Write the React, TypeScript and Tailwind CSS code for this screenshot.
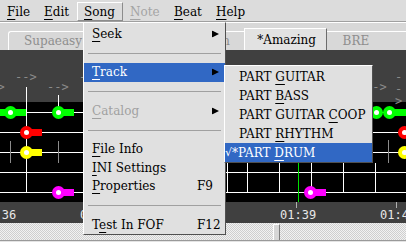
import React from "react";

const serif = "font-['DejaVu_Serif',serif]";
const mono = "font-['DejaVu_Sans_Mono',monospace]";

function Mn({ text, u }: { text: string; u?: number }) {
  if (u === undefined || u < 0) return <span>{text}</span>;
  return (
    <span className="whitespace-pre">
      {text.slice(0, u)}
      <span className="underline decoration-1 underline-offset-[3px]">{text[u]}</span>
      {text.slice(u + 1)}
    </span>
  );
}

const Arrow = () => (
  <svg width="7" height="7" viewBox="0 0 7 7" className="absolute right-[6px] top-1/2 -translate-y-1/2">
    <polygon points="0,0 7,3.5 0,7" fill="#000" />
  </svg>
);

const menuBar = [
  { label: "File", cls: "w-[37px]" },
  { label: "Edit", cls: "w-[40px]" },
  { label: "Song", cls: "w-[46px] border-t-white border-l-white border-r-[#8c8c8c] border-b-[#8c8c8c]" },
  { label: "Note", cls: "w-[44px] text-[#a4a4a4]" },
  { label: "Beat", cls: "w-[42px]" },
  { label: "Help", cls: "w-[50px]" },
];

type Note = { x: number; y: number; tail: number; color: string };

const noteColor: Record<string, string> = {
  green: "bg-[#00ff00]",
  red: "bg-[#ff0000]",
  yellow: "bg-[#ffff00]",
  magenta: "bg-[#ff00ff]",
};

// canvas coords: top of canvas = page y 50
const notes: Note[] = [
  { x: 58, y: 62, tail: 16, color: "green" },
  { x: 26, y: 82, tail: 16, color: "red" },
  { x: 26, y: 102, tail: 16, color: "yellow" },
  { x: 58, y: 142, tail: 16, color: "magenta" },
  { x: 310, y: 142, tail: 16, color: "magenta" },
  { x: 389, y: 62, tail: 20, color: "green" },
  { x: 376, y: 62, tail: 0, color: "green" },
  { x: 404, y: 82, tail: 10, color: "red" },
  { x: 404, y: 102, tail: 10, color: "yellow" },
];

const arrows = [
  { x: 15, y: 21 },
  { x: 79, y: 21 },
  { x: 395, y: 21 },
  { x: -17, y: 31 },
  { x: 47, y: 31 },
  { x: 365, y: 31 },
];

const gridLines = [
  { x: 26, top: 37, h: 105, cls: "bg-white" },
  { x: 58, top: 45, h: 17, cls: "bg-white" },
  { x: 10, top: 91, h: 22, cls: "bg-[#8c8c8c]" },
  { x: 58, top: 91, h: 22, cls: "bg-[#8c8c8c]" },
  { x: 388, top: 90, h: 23, cls: "bg-[#8c8c8c]" },
  { x: 227, top: 113, h: 29, cls: "bg-white" },
  { x: 247, top: 113, h: 29, cls: "bg-white" },
  { x: 279, top: 113, h: 29, cls: "bg-white" },
  { x: 311, top: 113, h: 29, cls: "bg-white" },
  { x: 343, top: 113, h: 29, cls: "bg-white" },
  { x: 375, top: 113, h: 29, cls: "bg-white" },
];

const times = [
  { x: -20, t: "01:36" },
  { x: 80, t: "01:37" },
  { x: 180, t: "01:38" },
  { x: 280, t: "01:39" },
  { x: 380, t: "01:40" },
];

const songMenu: ({ sep: true } | { label: string; u: number; sub?: boolean; key?: string; dim?: boolean; hot?: boolean })[] = [
  { label: "Seek", u: 0, sub: true },
  { sep: true },
  { label: "Track", u: 0, sub: true, hot: true },
  { sep: true },
  { label: "Catalog", u: 0, sub: true, dim: true },
  { sep: true },
  { label: "File Info", u: 0 },
  { label: "INI Settings", u: 0 },
  { label: "Properties", u: 0, key: "F9" },
  { sep: true },
  { label: "Test In FOF", u: 1, key: "F12" },
];

const tracks = [
  { label: "PART GUITAR", u: 5 },
  { label: "PART BASS", u: 5 },
  { label: "PART GUITAR COOP", u: 12 },
  { label: "PART RHYTHM", u: 5 },
];

export default function App() {
  return (
    <div className={`relative w-[406px] h-[242px] overflow-hidden bg-[#dcdcdc] text-[12px] text-black ${serif}`}>
      {/* menu bar */}
      <div className="flex h-[22px] pt-[2px] items-start bg-[#dcdcdc] border-b border-[#a0a0a0]">
        {menuBar.map((m) => (
          <div key={m.label} className={`h-[19px] flex items-center pl-[6px] border border-transparent ${m.cls}`}>
            <Mn text={m.label} u={0} />
          </div>
        ))}
      </div>

      {/* tabs */}
      <div className="flex items-end h-[28px] pl-[8px] bg-[#d8d8d8] border-t border-white">
        <div className="w-[88px] h-[19px] pl-[15px] flex items-center border-t border-l border-r border-t-white border-l-white border-r-[#9a9a9a] rounded-tl-[3px] text-[#8e8e8e]">Supaeasy</div>
        <div className="w-[70px] h-[19px] pl-[15px] flex items-center border-t border-r border-t-white border-r-[#9a9a9a] text-[#8e8e8e]">Easy</div>
        <div className="w-[80px] h-[19px] pl-[15px] flex items-center border-t border-t-white text-[#8e8e8e]">Medium</div>
        <div className="w-[83px] h-[22px] pl-[12px] flex items-center border-t border-l border-r border-t-white border-l-white border-r-[#6c6c6c] bg-[#e2e2e2]">*Amazing</div>
        <div className="w-[80px] h-[19px] pl-[16px] flex items-center border-t border-t-white text-[#8e8e8e]">BRE</div>
      </div>

      {/* note canvas */}
      <div className="relative h-[173px] overflow-hidden">
        <div className="h-[52px] bg-[#404040]" />
        <div className="h-[100px] bg-black" />
        <div className="h-[21px] bg-[#404040]" />

        {arrows.map((a, i) => (
          <span key={i} className={`absolute text-[12px] leading-none text-[#8a8a8a] ${mono}`} style={{ left: a.x, top: a.y }}>
            --&gt;
          </span>
        ))}

        {[62, 82, 102, 122, 142].map((y) => (
          <div key={y} className="absolute left-0 right-0 h-px bg-white" style={{ top: y }} />
        ))}

        {gridLines.map((g, i) => (
          <div key={i} className={`absolute w-px ${g.cls}`} style={{ left: g.x, top: g.top, height: g.h }} />
        ))}

        <div className="absolute left-0 w-[26px] h-[7px] bg-[#00ff00] top-[58.5px]" />
        <div className="absolute left-[4px] top-[55.5px] w-[13px] h-[13px] rounded-full bg-[#00ff00] flex items-center justify-center">
          <div className="w-[5px] h-[5px] rounded-full bg-white" />
        </div>

        {notes.map((n, i) => (
          <React.Fragment key={i}>
            {n.tail > 0 && (
              <div className={`absolute h-[7px] ${noteColor[n.color]}`} style={{ left: n.x, top: n.y - 3.5, width: n.tail }} />
            )}
            <div
              className={`absolute w-[13px] h-[13px] rounded-full flex items-center justify-center ${noteColor[n.color]}`}
              style={{ left: n.x - 6.5, top: n.y - 6.5 }}
            >
              <div className="w-[5px] h-[5px] rounded-full bg-white" />
            </div>
          </React.Fragment>
        ))}

        <div className="absolute left-[298px] top-[52px] w-px h-[100px] bg-[#00e000]" />

        {times.map((t) => (
          <React.Fragment key={t.t}>
            <div className="absolute w-px h-[6px] bg-[#b0b0b0] top-[152px]" style={{ left: t.x + 16 }} />
            <span className={`absolute top-[159px] text-[12px] leading-[13px] text-[#e8e8e8] ${mono}`} style={{ left: t.x }}>
              {t.t}
            </span>
          </React.Fragment>
        ))}
      </div>

      {/* horizontal scroll */}
      <div className="relative h-[17px] bg-[repeating-conic-gradient(#cfcfcf_0_25%,#f2f2f2_0_50%)] bg-[length:2px_2px]">
        <div className="absolute left-[273px] top-[1px] w-[7px] h-[16px] bg-[#d6d6d6] border-l border-t border-white border-r border-r-[#7c7c7c]" />
      </div>
      <div className="h-[2px] border-t border-[#9a9a9a] bg-[#e4e4e4]" />

      {/* Song menu */}
      <div className="absolute left-[83px] top-[22px] w-[143px] pt-[1.5px] bg-[#e0e0e0] border border-t-white border-l-white border-r-[#505050] border-b-[#505050]">
        {songMenu.map((m, i) =>
          "sep" in m ? (
            <div key={i} className="h-[20px] flex items-center px-[4px]">
              <div className="h-px w-full bg-[#a0a0a0]" />
            </div>
          ) : (
            <div
              key={i}
              className={`relative h-[18.5px] flex items-center pl-[8px] ${m.hot ? "bg-[#3168c4] text-white" : ""} ${m.dim ? "text-[#a0a0a0]" : ""}`}
            >
              <Mn text={m.label} u={m.u} />
              {m.key && <span className="absolute left-[113px]">{m.key}</span>}
              {m.sub && <Arrow />}
            </div>
          )
        )}
      </div>

      {/* Track submenu */}
      <div className="absolute left-[224px] top-[65px] w-[149px] pt-px bg-[#e0e0e0] border border-t-white border-l-white border-r-[#505050] border-b-[#505050]">
        {tracks.map((t) => (
          <div key={t.label} className="h-[19px] flex items-center pl-[14px]">
            <Mn text={t.label} u={t.u} />
          </div>
        ))}
        <div className="h-[19px] flex items-center bg-[#3168c4] text-white">
          <span className="w-[7px] text-[11px] leading-none">√</span>
          <span className="whitespace-pre">
            *<Mn text="PART DRUM" u={5} />
          </span>
        </div>
      </div>
    </div>
  );
}
